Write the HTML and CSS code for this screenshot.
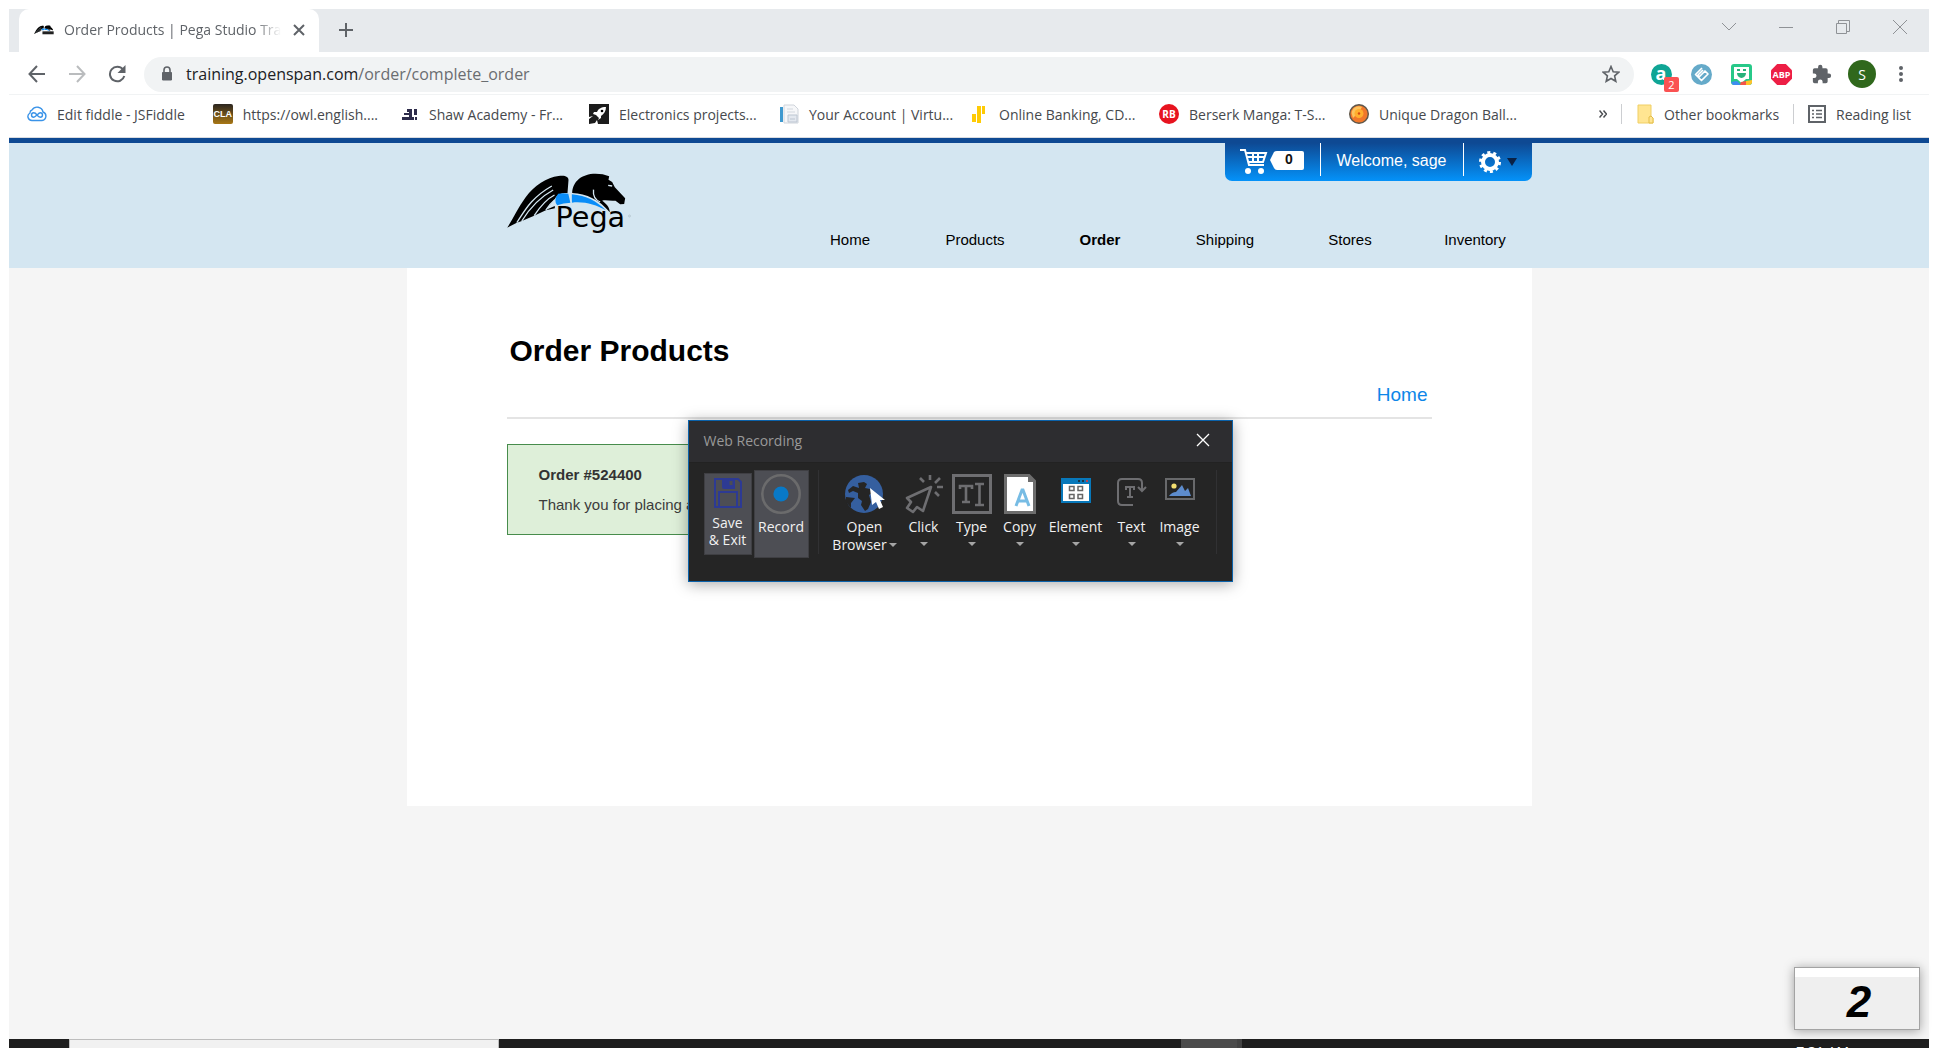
FILE: index.html
```html
<!DOCTYPE html>
<html lang="en">
<head>
<meta charset="utf-8">
<title>Order Products | Pega Studio Training</title>
<link rel="stylesheet" href="styles.css">
</head>
<body>
<svg width="0" height="0" class="defs" aria-hidden="true">
  <symbol id="horse" viewBox="82 100 374 180">
    <path d="M82 264C103 232 112 208 138 172C162 139 202 112 236 109C256 106 266 111 266 121L263 160C246 159 232 164 225 178C217 190 207 199 198 211L211 205L225 199L225 206L198 212L163 228L126 244L111 249Z" fill="#000"/>
    <path d="M111 249C132 218 152 175 216 139M126 244C148 208 174 176 220 151M163 228C178 205 195 181 224 166M198 211C206 199 214 189 225 180" fill="none" stroke="#d4e6f1" stroke-width="4"/>
    <path d="M277 160C278 125 306 102 347 102C363 102 375 104 388 110L386 120L397 127L405 143L436 176L433 193L421 194L407 183C391 185 379 180 367 183C378 191 390 202 390 218C359 180 320 162 277 160Z" fill="#000"/>
    <path d="M341 150C339 168 346 181 361 187M385 137L397 139" fill="none" stroke="#d4e6f1" stroke-width="4"/>
    <path d="M235 162Q250 160 268 162L273 189Q250 190 232 197Q220 181 235 162Z" fill="#0a8df8"/>
    <path d="M276 164C320 168 351 185 378 212C347 195 315 185 276 189Z" fill="#0a8df8"/>
    <path d="M267 160L274 190" stroke="#d4e6f1" stroke-width="4"/>
  </symbol>
</svg>

<div class="window">
  <div class="tabstrip">
    <div class="tab">
      <svg class="fav" viewBox="82 100 374 180"><use href="#horse" x="82" y="100" width="374" height="180"/><path d="M240 215H450V270H240Z" fill="#222"/></svg>
      <span class="tab-title">Order Products | Pega Studio Training</span>
      <button class="icon-btn tab-close" aria-label="Close tab"><svg width="12" height="12" viewBox="0 0 12 12"><path d="M1 1L11 11M11 1L1 11" stroke="#5f6368" stroke-width="2"/></svg></button>
    </div>
    <button class="icon-btn newtab" aria-label="New tab"><svg width="16" height="16" viewBox="0 0 16 16"><path d="M8 1V15M1 8H15" stroke="#5f6368" stroke-width="2"/></svg></button>
    <div class="controls">
      <button class="icon-btn" aria-label="Search tabs"><svg width="14" height="14" viewBox="0 0 14 14"><path d="M0 3L7 10L14 3"/></svg></button>
      <button class="icon-btn" aria-label="Minimize"><svg width="14" height="14" viewBox="0 0 14 14"><path d="M0 7.500H14"/></svg></button>
      <button class="icon-btn" aria-label="Restore"><svg width="14" height="14" viewBox="0 0 14 14"><path d="M.5 3.500H10.500V13.500H.5ZM2.500 3V.5H13.500V11.500H11"/></svg></button>
      <button class="icon-btn" aria-label="Close"><svg width="14" height="14" viewBox="0 0 14 14"><path d="M0 0L14 14M14 0L0 14"/></svg></button>
    </div>
  </div>

  <div class="toolbar">
    <div class="navbtns">
      <button class="icon-btn" aria-label="Back"><svg width="18" height="18" viewBox="0 0 18 18" fill="none" stroke="#5f6368" stroke-width="2"><path d="M17 9H2M9 1L1.500 9L9 17"/></svg></button>
      <button class="icon-btn" aria-label="Forward"><svg width="18" height="18" viewBox="0 0 18 18" fill="none" stroke="#babcbe" stroke-width="2"><path d="M1 9H16M9 1L16.500 9L9 17"/></svg></button>
      <button class="icon-btn" aria-label="Reload"><svg width="18" height="18" viewBox="0 0 18 18"><path d="M15 4.500A7.300 7.300 0 1 0 16.300 11" fill="none" stroke="#5f6368" stroke-width="2"/><path d="M17.500 0V8H9.500Z" fill="#5f6368"/></svg></button>
    </div>
    <div class="omnibox">
      <svg width="12" height="16" viewBox="0 0 12 16"><path d="M1.500 6.500H10.500V14H1.500Z" fill="#5f6368" stroke="#5f6368" stroke-linejoin="round"/><path d="M3 6V4A3 3 0 0 1 9 4V6" fill="none" stroke="#5f6368" stroke-width="1.600"/></svg>
      <a class="url" href="#"><span class="host">training.openspan.com</span>/order/complete_order</a>
      <button class="icon-btn" aria-label="Bookmark this page"><svg width="18" height="18" viewBox="0 0 18 18"><path d="M9 1.500L11.200 6.700L16.800 7.200L12.600 10.900L13.800 16.300L9 13.500L4.200 16.300L5.400 10.900L1.200 7.200L6.800 6.700Z" fill="none" stroke="#5f6368" stroke-width="1.600"/></svg></button>
    </div>
    <div class="exts">
      <button class="icon-btn ext" aria-label="Amazon Assistant"><svg width="21" height="21" viewBox="0 0 21 21"><circle cx="10.500" cy="10.500" r="10.500" fill="#0fa595"/><text x="10" y="16" text-anchor="middle" class="glyph-a">a</text></svg><span class="count">2</span></button>
      <button class="icon-btn ext" aria-label="Extension"><svg width="21" height="21" viewBox="0 0 21 21"><circle cx="10.500" cy="10.500" r="10.500" fill="#65aac9"/><path d="M11 4L4.500 10.500L10.500 16.500L17 10L14 7L8.500 12.500L7 11L12 6" fill="none" stroke="#fff" stroke-width="1.700" stroke-linejoin="round"/></svg></button>
      <button class="icon-btn ext" aria-label="Bitmoji"><svg width="21" height="21" viewBox="0 0 21 21"><rect width="21" height="21" rx="3" fill="#27c989"/><path d="M3 3H18V15H15L10.500 19L6 15H3Z" fill="#fff"/><path d="M0 18L6 17L10 21H2Z" fill="#3e8df0"/><path d="M10 18L15 17L16 21H9Z" fill="#f45449"/><path d="M15 17L21 16V19L19 21H15Z" fill="#ffc229"/><path d="M6 9H15A4.500 5 0 0 1 6 9ZM6 5H9V7H6ZM12 5H15V7H12Z" fill="#27b27b"/></svg></button>
      <button class="icon-btn ext" aria-label="Adblock Plus"><svg width="21" height="21" viewBox="0 0 21 21"><path d="M6.200 0H14.800L21 6.200V14.800L14.800 21H6.200L0 14.800V6.200Z" fill="#ed1e45"/><text x="10.500" y="14" text-anchor="middle" class="glyph-abp">ABP</text></svg></button>
      <button class="icon-btn ext" aria-label="Extensions"><svg width="20" height="20" viewBox="1 0 23 23"><path d="M20.500 11H19V7a2 2 0 0 0-2-2h-4V3.500a2.500 2.500 0 0 0-5 0V5H4a2 2 0 0 0-2 2v3.800h1.500a2.700 2.700 0 0 1 0 5.400H2V20a2 2 0 0 0 2 2h3.800v-1.500a2.700 2.700 0 0 1 5.400 0V22H17a2 2 0 0 0 2-2v-4h1.500a2.500 2.500 0 0 0 0-5z" fill="#5f6368"/></svg></button>
    </div>
    <button class="avatar" aria-label="Profile">S</button>
    <button class="icon-btn menu" aria-label="Menu"><svg width="4" height="18" viewBox="0 0 4 18" fill="#5f6368"><circle cx="2" cy="3" r="2"/><circle cx="2" cy="9" r="2"/><circle cx="2" cy="15" r="2"/></svg></button>
  </div>

  <nav class="bookmarks" aria-label="Bookmarks">
    <a class="bm narrow" href="#"><svg width="20" height="20" viewBox="0 0 20 20" fill="none" stroke="#3a93e8" stroke-width="1.400"><path d="M5 16.500A4 4 0 0 1 3 9A3 3 0 0 1 5 6A6 6 0 0 1 16 8A4.400 4.400 0 0 1 15 16.500Z"/><path d="M10 11C8.500 9 7.500 8.800 6.700 8.800A2.200 2.200 0 0 0 6.700 13.200C8 13.200 9 12 10 11S12 8.800 13.300 8.800A2.200 2.200 0 0 1 13.300 13.200C12.500 13.200 11.500 13 10 11Z"/></svg><span>Edit fiddle - JSFiddle</span></a>
    <a class="bm narrow" href="#"><span class="cla">CLA</span><span>https://owl.english....</span></a>
    <a class="bm" href="#"><svg width="20" height="20" viewBox="0 0 20 20" fill="#2e2c4b"><path d="M8 5H13V13H15V16H3V13H10V11H5V9H10V8H8ZM15 5H18V11H15ZM16 13H18V16H16Z"/></svg><span>Shaw Academy - Fr...</span></a>
    <a class="bm" href="#"><svg width="20" height="20" viewBox="0 0 20 20"><path d="M0 0H20V20H9L8 16L6 19L0 20V15L4 12L0 13Z" fill="#1c1c1c"/><path d="M17 3C12 3 9 5 8 8H5L4 10L7 11L10 14L9 16L12 14V12C15 10 17 7 17 3Z" fill="#fff"/><circle cx="13" cy="7" r="1.300"/></svg><span>Electronics projects...</span></a>
    <a class="bm" href="#"><svg width="20" height="20" viewBox="0 0 20 20"><path d="M5 1H15L19 5V19H5Z" fill="#f6f7f9" stroke="#cfd4db"/><path d="M1 3H4V18H1Z" fill="#3f99cf"/><path d="M8 5H14M8 8H16" stroke="#d3d8df"/><path d="M9 11H18V18H9Z" fill="#e3e8ef" stroke="#bcc5d1"/><path d="M11 15H16" stroke="#bcc5d1"/></svg><span>Your Account | Virtu...</span></a>
    <a class="bm" href="#"><svg width="20" height="20" viewBox="0 0 20 20" fill="#ffcb05"><path d="M3 10H7V18H3ZM8 2H12V19H8ZM13 2H16V10H13Z"/></svg><span>Online Banking, CD...</span></a>
    <a class="bm" href="#"><svg width="20" height="20" viewBox="0 0 20 20"><circle cx="10" cy="10" r="10" fill="#e7131f"/><text x="10" y="14" text-anchor="middle" class="glyph-rb">RB</text></svg><span>Berserk Manga: T-S...</span></a>
    <a class="bm" href="#"><svg width="20" height="20" viewBox="0 0 20 20"><circle cx="10" cy="10" r="9.300" fill="#f1782b" stroke="#5d574b" stroke-width="1.400"/><path d="M2.500 9A7.500 7.500 0 0 1 13 3L10 8L4 14Z" fill="#fcc45e"/><circle cx="10" cy="9.500" r="4.500" fill="#ffae2e"/><circle cx="10" cy="9.500" r="1.200" fill="#d74a12"/></svg><span>Unique Dragon Ball...</span></a>
    <div class="bm-right">
      <button class="icon-btn more" aria-label="More bookmarks"><svg width="8" height="8" viewBox="0 0 8 8" fill="none" stroke="#4a4d51" stroke-width="1.500"><path d="M.5 .5L3.500 4L.5 7.500M4.500 .5L7.500 4L4.500 7.500"/></svg></button>
      <a class="bm-end" href="#"><svg width="18" height="20" viewBox="0 0 18 20"><path d="M2 1H15V12L17 14V19H2Z" fill="#ffe592" stroke="#f0cf65"/><path d="M13 19V13L15 12L17 14V19Z" fill="#ffe592" stroke="#e3bd48"/></svg><span>Other bookmarks</span></a>
      <a class="bm-end" href="#"><svg width="18" height="18" viewBox="0 0 18 18" fill="none" stroke="#5f6368"><rect x="1" y="1" width="16" height="16" stroke-width="2"/><path d="M4 5.500H6M4 9H6M4 12.500H6M8 5.500H14M8 9H14M8 12.500H14" stroke-width="1.600"/></svg><span>Reading list</span></a>
    </div>
  </nav>

  <div class="page">
    <header class="site-header">
      <div class="wrap header-in">
        <a class="logo" href="#" aria-label="Pega home"><svg width="125" height="60" viewBox="82 100 374 180"><use href="#horse" x="82" y="100" width="374" height="180"/><text x="227" y="263" class="logo-text">Pega</text><circle cx="449" cy="229" r="3" fill="none" stroke="#8c979e"/></svg></a>
        <div class="header-right">
          <div class="userbar">
            <a class="cart" href="#"><svg width="64" height="28" viewBox="0 0 64 28"><path d="M0 3H5L9 18H24M6 6H26L23 15H9M13 6V15M18 6V15M7 10H25" fill="none" stroke="#fff" stroke-width="2"/><circle cx="8" cy="24" r="3" fill="#fff"/><circle cx="21" cy="24" r="3" fill="#fff"/><path d="M30 13L34 5Q35 4 37 4H62Q64 4 64 6V21Q64 23 62 23H37Q35 23 34 21Z" fill="#fff"/><text x="49" y="17" text-anchor="middle" class="cart-n">0</text></svg></a>
            <a class="welcome" href="#">Welcome, sage</a>
            <button class="settings" aria-label="Settings"><svg width="22" height="22" viewBox="0 0 22 22"><circle cx="11" cy="11" r="7" fill="none" stroke="#fff" stroke-width="4"/><circle cx="11" cy="11" r="9.500" fill="none" stroke="#fff" stroke-width="3" stroke-dasharray="3 2.970"/></svg><svg width="10" height="8" viewBox="0 0 10 8"><path d="M0 0H10L5 8Z" fill="#0a2145"/></svg></button>
          </div>
          <nav class="menu-row" aria-label="Main">
            <a href="#">Home</a><a href="#">Products</a><a href="#" class="current">Order</a><a href="#">Shipping</a><a href="#">Stores</a><a href="#">Inventory</a>
          </nav>
        </div>
      </div>
    </header>
    <main class="wrap content">
      <h1>Order Products</h1>
      <div class="crumb"><a href="#">Home</a></div>
      <section class="notice">
        <h2>Order #524400</h2>
        <p>Thank you for placing an order.</p>
      </section>

      <section class="recorder" role="dialog" aria-label="Web Recording">
        <div class="rec-title"><span>Web Recording</span><button class="icon-btn" aria-label="Close recorder"><svg width="14" height="14" viewBox="0 0 14 14"><path d="M1 1L13 13M13 1L1 13" stroke="#fff" stroke-width="1.300"/></svg></button></div>
        <div class="rec-body">
          <button class="tool boxed save"><svg width="28" height="30" viewBox="0 0 28 30" fill="none" stroke="#2d3a93" stroke-width="2"><path d="M1 1H24L27 4V29H1ZM5 29V14H23V29"/><path d="M8 1H21V11H10Q8 11 8 9Z" fill="#2d3a93" stroke="none"/><path d="M17 3V7" stroke="#4b4d55" stroke-width="3"/></svg><span>Save<br>&amp; Exit</span></button>
          <button class="tool boxed record"><svg width="40" height="40" viewBox="0 0 40 40"><circle cx="20" cy="20" r="18.700" fill="none" stroke="#6b6b6c" stroke-width="2.600"/><circle cx="20" cy="20" r="7.600" fill="#0879c7"/></svg><span>Record</span></button>
          <div class="tools">
            <button class="tool"><svg width="40" height="40" viewBox="0 0 40 40"><circle cx="19" cy="20" r="19" fill="#355f9f"/><path d="M3 16L8 12L14 14L13 9L19 8L22 10L20 14L25 15L27 19L24 21L26 28L23 35L20 37L16 31L17 27L13 24V19L8 17L4 19ZM1 23L10 24L6 29L6 34L1 28Z" fill="#252525"/><path d="M25 14L27 31L31 28L34 35L38 33L35 26L40 26Z" fill="#fff"/></svg><span>Open</span><span class="line">Browser<i class="caret"></i></span></button>
            <button class="tool"><svg width="40" height="40" viewBox="0 0 40 40" fill="none" stroke="#6e6e71" stroke-width="2.600"><path d="M27 13L3 24L7 28L3 34L9 38L13 33L19 37Z" stroke-linejoin="round"/><path d="M26 1V6M16 4L20 8M36 4L31 9M33 13H39M31 18L35 22"/></svg><span>Click</span><i class="caret"></i></button>
            <button class="tool"><svg width="40" height="40" viewBox="0 0 40 40" fill="none" stroke="#6e6e71" stroke-width="3"><rect x="1.500" y="1.500" width="37" height="37"/><path d="M8 15V12H20V15M14 12V28M10 28H18M23 10H32M23 31H32M27.500 10V31" stroke-width="2.600"/></svg><span>Type</span><i class="caret"></i></button>
            <button class="tool"><svg width="32" height="40" viewBox="0 0 32 40"><path d="M1.500 1.500H25L30.500 7V38.500H1.500Z" fill="#fff" stroke="#6d6d6d" stroke-width="3"/><path d="M24 1V8H31Z" fill="#6d6d6d"/><path d="M12 32L18 16H19L25 32M14 27H24" fill="none" stroke="#77bce4" stroke-width="3"/></svg><span>Copy</span><i class="caret"></i></button>
            <button class="tool"><svg width="30" height="40" viewBox="0 -4 30 40"><rect width="30" height="25" fill="#0878ba"/><path d="M2 6H28V23H2Z" fill="#fff"/><path d="M8.500 8.500H13V12.500H8.500ZM17 8.500H21.500V12.500H17ZM8.500 16.500H13V20.500H8.500ZM17 16.500H21.500V20.500H17Z" fill="none" stroke="#666" stroke-width="1.500"/><circle cx="18" cy="3" r="1" fill="#222"/><circle cx="22" cy="3" r="1" fill="#222"/><circle cx="26" cy="3" r="1" fill="#e33"/></svg><span>Element</span><i class="caret"></i></button>
            <button class="tool"><svg width="30" height="40" viewBox="0 -4 30 40" fill="none" stroke="#6e6e71" stroke-width="2"><path d="M16 27H5Q1 27 1 23V5Q1 1 5 1H21Q25 1 25 5V13M21 9L25 13L29 9"/><path d="M9 12V9H17V12M13 9V19M10 19H16"/></svg><span>Text</span><i class="caret"></i></button>
            <button class="tool"><svg width="30" height="40" viewBox="0 -4 30 40"><rect x="1" y="1" width="28" height="20" fill="none" stroke="#68696b" stroke-width="2"/><circle cx="9" cy="8" r="2.600" fill="#f3df70"/><path d="M4 18Q7 14 11 14L17 7L20 13L23 10L26 18Z" fill="#5d8ccd"/></svg><span>Image</span><i class="caret"></i></button>
          </div>
        </div>
      </section>
    </main>
    <div class="step">2</div>
  </div>
  <footer class="taskbar"><span class="search"></span><span class="task"></span><time>7:31 AM</time></footer>
</div>
</body>
</html>
```
FILE: styles.css
```css
* { box-sizing: border-box; }
body { margin: 0; background: #fff; font-family: "Liberation Sans", Arial, sans-serif; color: #000; }
a { color: inherit; text-decoration: none; }
button { border: 0; background: none; padding: 0; font: inherit; color: inherit; }
svg { display: block; flex: none; }
.defs { position: absolute; }
.icon-btn { display: flex; align-items: center; justify-content: center; }
.window { display: flex; flex-direction: column; min-height: 100vh; padding: 9px 9px 0; }

/* Tabs */
.tabstrip { display: flex; height: 43px; background: #e7eaed; font-family: "Open Sans", sans-serif; font-size: 14px; color: #5f6368; }
.tab { display: flex; align-items: center; width: 300px; margin-left: 10px; padding: 0 14px 2px 15px; background: #fff; border-radius: 10px 10px 0 0; }
.fav { width: 20px; height: 12px; margin-right: 10px; }
.tab-title { flex: 1; overflow: hidden; white-space: nowrap; mask-image: linear-gradient(to right, #000 88%, transparent); }
.tab-close { margin-left: 12px; }
.newtab { margin-left: 19px; padding-bottom: 2px; }
.controls { display: flex; gap: 43px; margin-left: auto; padding-right: 22px; height: 36px; }
.controls svg { fill: none; stroke: #8f9296; }

/* Toolbar */
.toolbar { display: flex; align-items: center; height: 43px; padding-top: 2px; border-bottom: 1px solid #f1f3f4; font-family: "Open Sans", sans-serif; }
.navbtns { display: flex; gap: 22px; width: 135px; padding-left: 19px; }
.omnibox { display: flex; align-items: center; flex: 1; height: 35px; padding: 0 14px 0 17px; border-radius: 18px; background: #f1f3f4; }
.url { flex: 1; margin-left: 13px; font-size: 16px; color: #6a6d71; }
.host { color: #202124; }
.exts { display: flex; gap: 19px; margin-left: 17px; }
.ext { position: relative; width: 21px; }
.glyph-a { font: bold 18px "Open Sans", sans-serif; fill: #fff; }
.glyph-abp { font: bold 9px "Open Sans", sans-serif; fill: #fff; }
.glyph-rb { font: bold 10px "Open Sans", sans-serif; fill: #fff; }
.count { position: absolute; left: 13px; top: 13px; width: 15px; height: 15px; border-radius: 2px; background: #fa5252; color: #fff; font-size: 11px; line-height: 15px; text-align: center; }
.avatar { width: 28px; height: 28px; margin-left: 16px; border-radius: 50%; background: #30681c; color: #fff; font-size: 14px; }
.menu { width: 4px; margin: 0 26px 0 23px; }

/* Bookmarks */
.bookmarks { display: flex; align-items: center; gap: 21px; height: 43px; padding: 0 18px 4px 18px; border-bottom: 1px solid #dadce0; font-family: "Open Sans", sans-serif; font-size: 14px; color: #46494d; white-space: nowrap; }
.bm { display: flex; align-items: center; gap: 10px; width: 169px; }
.bm.narrow { width: 165px; }
.cla { width: 20px; height: 20px; border-radius: 2px; background: linear-gradient(#2b2520, #a87715); color: #fff; font: bold 9px/20px "Liberation Sans", sans-serif; text-align: center; }
.bm-right { display: flex; align-items: center; margin-left: auto; }
.more { margin-right: 14px; }
.bm-end { display: flex; align-items: center; gap: 10px; height: 20px; padding-left: 14px; border-left: 1px solid #ccced1; }
.bm-end + .bm-end { margin-left: 14px; }

/* Site */
.page { position: relative; flex: 1; background: #f5f5f5; }
.wrap { max-width: 1125px; margin: 0 auto; }
.site-header { border-top: 5px solid #0e4993; background: #d4e6f1; }
.header-in { display: flex; justify-content: space-between; height: 125px; padding-left: 100px; }
.logo { padding-top: 30px; }
.logo-text { font-family: "DejaVu Sans", sans-serif; font-size: 86px; }
.header-right { display: flex; flex-direction: column; align-items: flex-end; justify-content: space-between; }
.userbar { display: flex; height: 38px; padding-bottom: 5px; border-radius: 0 0 7px 7px; background: linear-gradient(#0e4993, #0492f9); color: #fff; font-size: 17px; line-height: 35px; }
.cart { padding: 4px 16px 0 15px; }
.cart-n { font: bold 14px "Liberation Sans", sans-serif; fill: #111; }
.welcome { padding: 0 14px; border: solid #fff; border-width: 0 1px; font-size: 16px; padding: 0 16px; }
.settings { display: flex; align-items: center; gap: 6px; padding: 4px 15px 0; }
.menu-row { display: grid; grid-template-columns: repeat(6, 125px); margin-right: -6px; padding-bottom: 18px; font-size: 15px; line-height: 20px; text-align: center; }
.current { font-weight: bold; }
.content { position: relative; min-height: 538px; padding: 65px 100px 0; background: #fff; }
h1 { margin: 0; padding-left: 3px; font-size: 30px; line-height: 36px; }
.crumb { padding: 15px 4px 11px; border-bottom: 2px solid #e4e4e4; font-size: 19px; line-height: 22px; text-align: right; color: #0d86e8; }
.notice { width: 640px; margin-top: 25px; padding: 15px 31px 14px; border: 1px solid #478c4c; background: #deefd9; font-size: 15px; line-height: 30px; color: #3c3c3c; }
h2, .notice p { margin: 0; font-size: 15px; }
h2 { color: #333; }

/* Floating recorder window */
.recorder { position: absolute; left: 281px; top: 152px; width: 545px; border: 1px solid #0b62aa; background: #252525; box-shadow: 0 2px 14px rgba(0, 0, 0, .35); font-family: "Open Sans", sans-serif; color: #f1f1f1; }
.rec-title { display: flex; align-items: center; justify-content: space-between; height: 42px; padding: 0 22px 3px 15px; background: #2d2d30; border-bottom: 1px solid #222; font-size: 14px; color: #999; }
.rec-body { display: flex; align-items: flex-start; height: 118px; padding: 7px 15px 0; font-size: 14px; line-height: 18px; }
.tool { display: flex; flex-direction: column; align-items: center; padding-top: 4px; white-space: nowrap; }
.tool svg { margin-bottom: 4px; }
.boxed { height: 88px; background: #4d4e54; border: 1px solid #3f3f43; }
.save { width: 48px; height: 82px; margin: 3px 2px 0 0; line-height: 17px; }
.save svg { margin-bottom: 6px; }
.record { width: 55px; padding-top: 3px; }
.tools { display: grid; grid-template-columns: 68px 46px 46px 46px 62px 46px 46px; gap: 2px; height: 84px; margin-left: 9px; padding: 0 13px 0 12px; border: solid #313133; border-width: 0 1px; }
.line { display: flex; align-items: center; gap: 2px; }
.caret { margin-top: 6px; border: solid transparent; border-width: 4px 4px 0; border-top-color: #a5a5a5; }
.line .caret { margin-top: 0; }

.step { position: absolute; right: 9px; bottom: 9px; width: 126px; height: 63px; padding-left: 4px; border: 1px solid #a3a3a3; background: linear-gradient(#fff 9px, #efefef 9px); box-shadow: 0 1px 10px rgba(0, 0, 0, .35); font: italic bold 44px/68px "Liberation Sans", Arial, sans-serif; text-align: center; }
.taskbar { display: flex; height: 9px; overflow: hidden; background: #1e1e1e; padding-left: 60px; color: #fff; font: 14px/20px "Open Sans", sans-serif; }
.search { width: 430px; border: 1px solid #bdbdbd; border-bottom: 0; background: #f1f1f1; }
.task { width: 61px; margin-left: 682px; background: #4b4b4b; border-right: 5px solid #424242; }
.taskbar time { margin-left: auto; padding: 3px 80px 0 0; }
```
